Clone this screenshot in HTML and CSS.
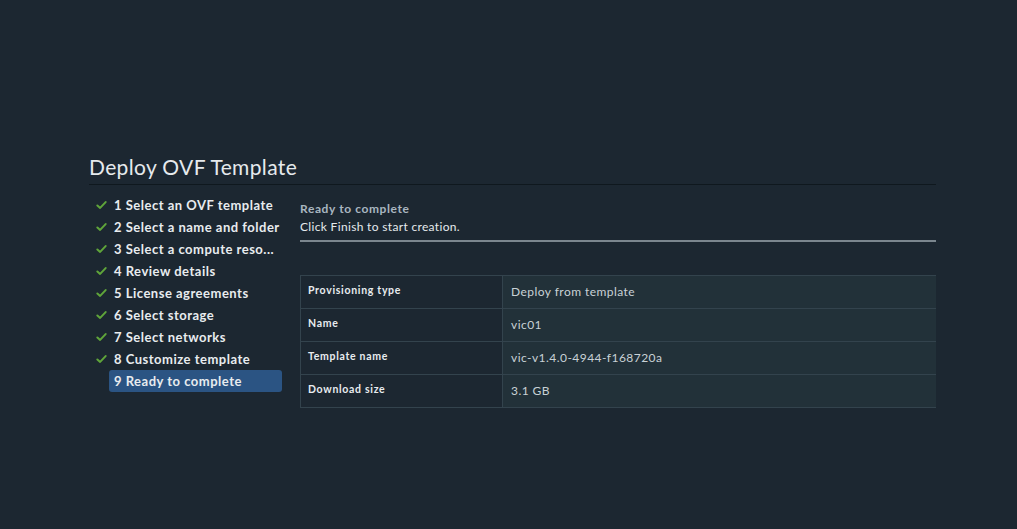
FILE: index.html
```html
<!DOCTYPE html>
<html>
<head>
<meta charset="utf-8">
<link rel="stylesheet" href="styles.css">
</head>
<body>
<div class="wizard">
  <h1 class="title">Deploy OVF Template</h1>
  <div class="body">
    <ul class="steps">
      <li class="step done"><svg class="chk" viewBox="0 0 12 10"><path d="M1.5 5.5 L4.5 8.2 L10.5 1.8"/></svg><span>1 Select an OVF template</span></li>
      <li class="step done"><svg class="chk" viewBox="0 0 12 10"><path d="M1.5 5.5 L4.5 8.2 L10.5 1.8"/></svg><span>2 Select a name and folder</span></li>
      <li class="step done"><svg class="chk" viewBox="0 0 12 10"><path d="M1.5 5.5 L4.5 8.2 L10.5 1.8"/></svg><span>3 Select a compute reso...</span></li>
      <li class="step done"><svg class="chk" viewBox="0 0 12 10"><path d="M1.5 5.5 L4.5 8.2 L10.5 1.8"/></svg><span>4 Review details</span></li>
      <li class="step done"><svg class="chk" viewBox="0 0 12 10"><path d="M1.5 5.5 L4.5 8.2 L10.5 1.8"/></svg><span>5 License agreements</span></li>
      <li class="step done"><svg class="chk" viewBox="0 0 12 10"><path d="M1.5 5.5 L4.5 8.2 L10.5 1.8"/></svg><span>6 Select storage</span></li>
      <li class="step done"><svg class="chk" viewBox="0 0 12 10"><path d="M1.5 5.5 L4.5 8.2 L10.5 1.8"/></svg><span>7 Select networks</span></li>
      <li class="step done"><svg class="chk" viewBox="0 0 12 10"><path d="M1.5 5.5 L4.5 8.2 L10.5 1.8"/></svg><span>8 Customize template</span></li>
      <li class="step active"><span class="chk-space"></span><span class="pill">9 Ready to complete</span></li>
    </ul>
    <div class="content">
      <div class="head">
        <div class="subtitle">Ready to complete</div>
        <div class="desc">Click Finish to start creation.</div>
      </div>
      <div class="table">
        <div class="row"><div class="k">Provisioning type</div><div class="v">Deploy from template</div></div>
        <div class="row"><div class="k">Name</div><div class="v">vic01</div></div>
        <div class="row"><div class="k">Template name</div><div class="v">vic-v1.4.0-4944-f168720a</div></div>
        <div class="row"><div class="k">Download size</div><div class="v">3.1 GB</div></div>
        <div class="row partial"><div class="k"></div><div class="v"></div></div>
      </div>
    </div>
  </div>
</div>
</body>
</html>
```

FILE: styles.css
```css
html, body {
  margin: 0;
  padding: 0;
  background: #1c2731;
  width: 1017px;
  height: 529px;
  overflow: hidden;
  font-family: Lato, "Open Sans", sans-serif;
}
.wizard {
  padding: 153px 0 0 89px;
  width: 847px;
}
.title {
  margin: 0;
  font-size: 21px;
  font-weight: 400;
  color: #e6eaed;
  line-height: 28px;
  padding-bottom: 3px;
  border-bottom: 1px solid #0f181e;
  letter-spacing: 0.35px;
}
.body {
  display: flex;
}
.steps {
  list-style: none;
  margin: 0;
  padding: 9px 0 0 7px;
  width: 204px;
}
.step {
  display: flex;
  align-items: center;
  height: 22px;
  font-size: 13px;
  font-weight: 700;
  color: #e8ecef;
  letter-spacing: 0.5px;
  white-space: nowrap;
}
.chk {
  width: 11px;
  height: 10px;
  margin-right: 7px;
  flex: none;
}
.chk path {
  fill: none;
  stroke: #5fa53a;
  stroke-width: 2.2;
  stroke-linecap: round;
  stroke-linejoin: round;
}
.chk-space {
  width: 13px;
  flex: none;
}
.pill {
  background: #2b5483;
  border-radius: 3px;
  padding: 0 0 0 5px;
  line-height: 22px;
  width: 168px;
}
.content {
  flex: 1;
}
.head {
  padding-top: 15px;
  height: 40px;
  border-bottom: 2px solid #7b868e;
}
.subtitle {
  font-size: 12px;
  font-weight: 700;
  color: #a9b6c0;
  line-height: 17px;
  letter-spacing: 0.6px;
}
.desc {
  font-size: 12px;
  color: #e6eaed;
  line-height: 19px;
  letter-spacing: 0.33px;
}
.table {
  margin-top: 33px;
  border-top: 1px solid #33434d;
  border-left: 1px solid #33434d;
  height: 132px;
  overflow: hidden;
}
.row {
  display: grid;
  grid-template-columns: 202px 1fr;
  height: 32px;
  border-bottom: 1px solid #33434d;
}
.k {
  background: #1c2731;
  border-right: 1px solid #33434d;
  padding-left: 7px;
  font-size: 10.5px;
  font-weight: 700;
  color: #e8ecef;
  line-height: 29px;
  letter-spacing: 0.7px;
}
.v {
  background: #223139;
  padding-left: 8px;
  font-size: 12px;
  color: #c9d1d6;
  line-height: 31px;
  letter-spacing: 0.45px;
}
```
